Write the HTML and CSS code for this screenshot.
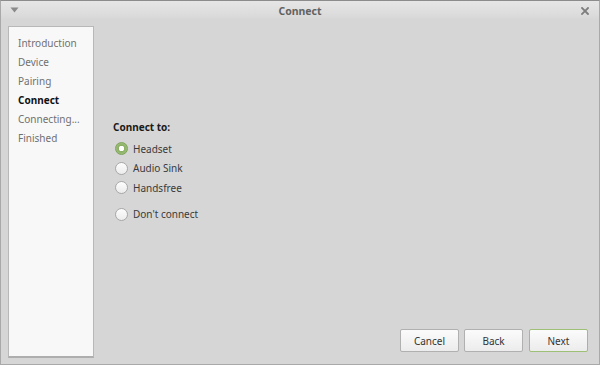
FILE: index.html
```html
<!DOCTYPE html>
<html>
<head>
<meta charset="utf-8">
<link rel="stylesheet" href="styles.css">
</head>
<body>
<div class="window">
  <div class="titlebar">
    <svg class="menu-icon" width="9" height="6" viewBox="0 0 9 6"><path d="M0.5 0.5 L8.5 0.5 L4.5 5.5 Z" fill="#8a8a8a"/></svg>
    <div class="title">Connect</div>
    <svg class="close-icon" width="8" height="8" viewBox="0 0 8 8"><path d="M1 1 L7 7 M7 1 L1 7" stroke="#7d7d7d" stroke-width="1.8" stroke-linecap="square"/></svg>
  </div>
  <div class="body">
    <nav class="sidebar">
      <div class="step">Introduction</div>
      <div class="step">Device</div>
      <div class="step">Pairing</div>
      <div class="step active">Connect</div>
      <div class="step">Connecting...</div>
      <div class="step">Finished</div>
    </nav>
    <main class="main">
      <div class="content">
        <div class="heading">Connect to:</div>
        <label class="radio"><span class="dot checked"></span>Headset</label>
        <label class="radio"><span class="dot"></span>Audio Sink</label>
        <label class="radio"><span class="dot"></span>Handsfree</label>
        <label class="radio gap"><span class="dot"></span>Don't connect</label>
      </div>
      <div class="buttons">
        <button class="btn">Cancel</button>
        <button class="btn">Back</button>
        <button class="btn default">Next</button>
      </div>
    </main>
  </div>
</div>
</body>
</html>
```
FILE: styles.css
```css
html, body {
  margin: 0;
  padding: 0;
}
body {
  font-family: "Noto Sans", "Open Sans", sans-serif;
  font-size: 10px;
  color: #3c3c3c;
  background: #d6d6d6;
}
.window {
  width: 600px;
  height: 365px;
  box-sizing: border-box;
  border: 1px solid #a9a9a9;
  border-top-color: #8c8c8c;
  background: #d6d6d6;
  display: flex;
  flex-direction: column;
}
.titlebar {
  height: 19px;
  flex: none;
  display: flex;
  align-items: center;
  padding: 0 9px 0 9px;
  background: linear-gradient(#e6e6e6, #dcdcdc 70%, #d6d6d6);
}
.menu-icon {
  flex: none;
  margin-top: -2px;
}
.title {
  flex: 1;
  text-align: center;
  font-weight: bold;
  color: #626262;
  font-size: 10.5px;
}
.close-icon {
  flex: none;
  margin-top: 1px;
  margin-right: 1px;
}
.body {
  flex: 1;
  display: flex;
  padding: 6px 0 6px 7px;
  min-height: 0;
}
.sidebar {
  flex: none;
  width: 86px;
  box-sizing: border-box;
  background: #f8f8f8;
  border: 1px solid #b8b8b8;
  border-bottom: 2px solid #aeaeae;
  padding-top: 7px;
  padding-left: 9px;
}
.step {
  height: 19px;
  line-height: 19px;
  color: #707070;
}
.step.active {
  color: #111;
  font-weight: bold;
}
.main {
  flex: 1;
  display: flex;
  flex-direction: column;
  padding-right: 11px;
}
.content {
  flex: 1;
  padding-left: 19px;
  padding-top: 91px;
}
.heading {
  font-weight: bold;
  color: #1a1a1a;
  height: 20px;
  line-height: 20px;
  margin-bottom: 2px;
}
.radio {
  display: flex;
  align-items: center;
  height: 19.5px;
  color: #3a3a3a;
}
.radio.gap {
  margin-top: 7px;
}
.dot {
  width: 11px;
  height: 11px;
  border-radius: 50%;
  border: 1px solid #a8a8a8;
  background: linear-gradient(#fdfdfd, #ececec);
  margin-left: 2px;
  margin-right: 5px;
  flex: none;
}
.dot.checked {
  border-color: #7fa35a;
  background: radial-gradient(circle, #ffffff 0, #ffffff 2.5px, #8bb065 3px, #9cbd79 5.5px);
}
.buttons {
  display: flex;
  justify-content: flex-end;
  gap: 5px;
  padding-bottom: 6px;
}
.btn {
  font-family: "Noto Sans", "Open Sans", sans-serif;
  font-size: 10px;
  color: #333;
  width: 59px;
  height: 23px;
  padding: 0;
  border: 1px solid #b0b0b0;
  border-radius: 2px;
  background: linear-gradient(#fbfbfb, #ececec);
}
.btn.default {
  border-color: #9ebf76;
  margin-left: 1px;
}
```
